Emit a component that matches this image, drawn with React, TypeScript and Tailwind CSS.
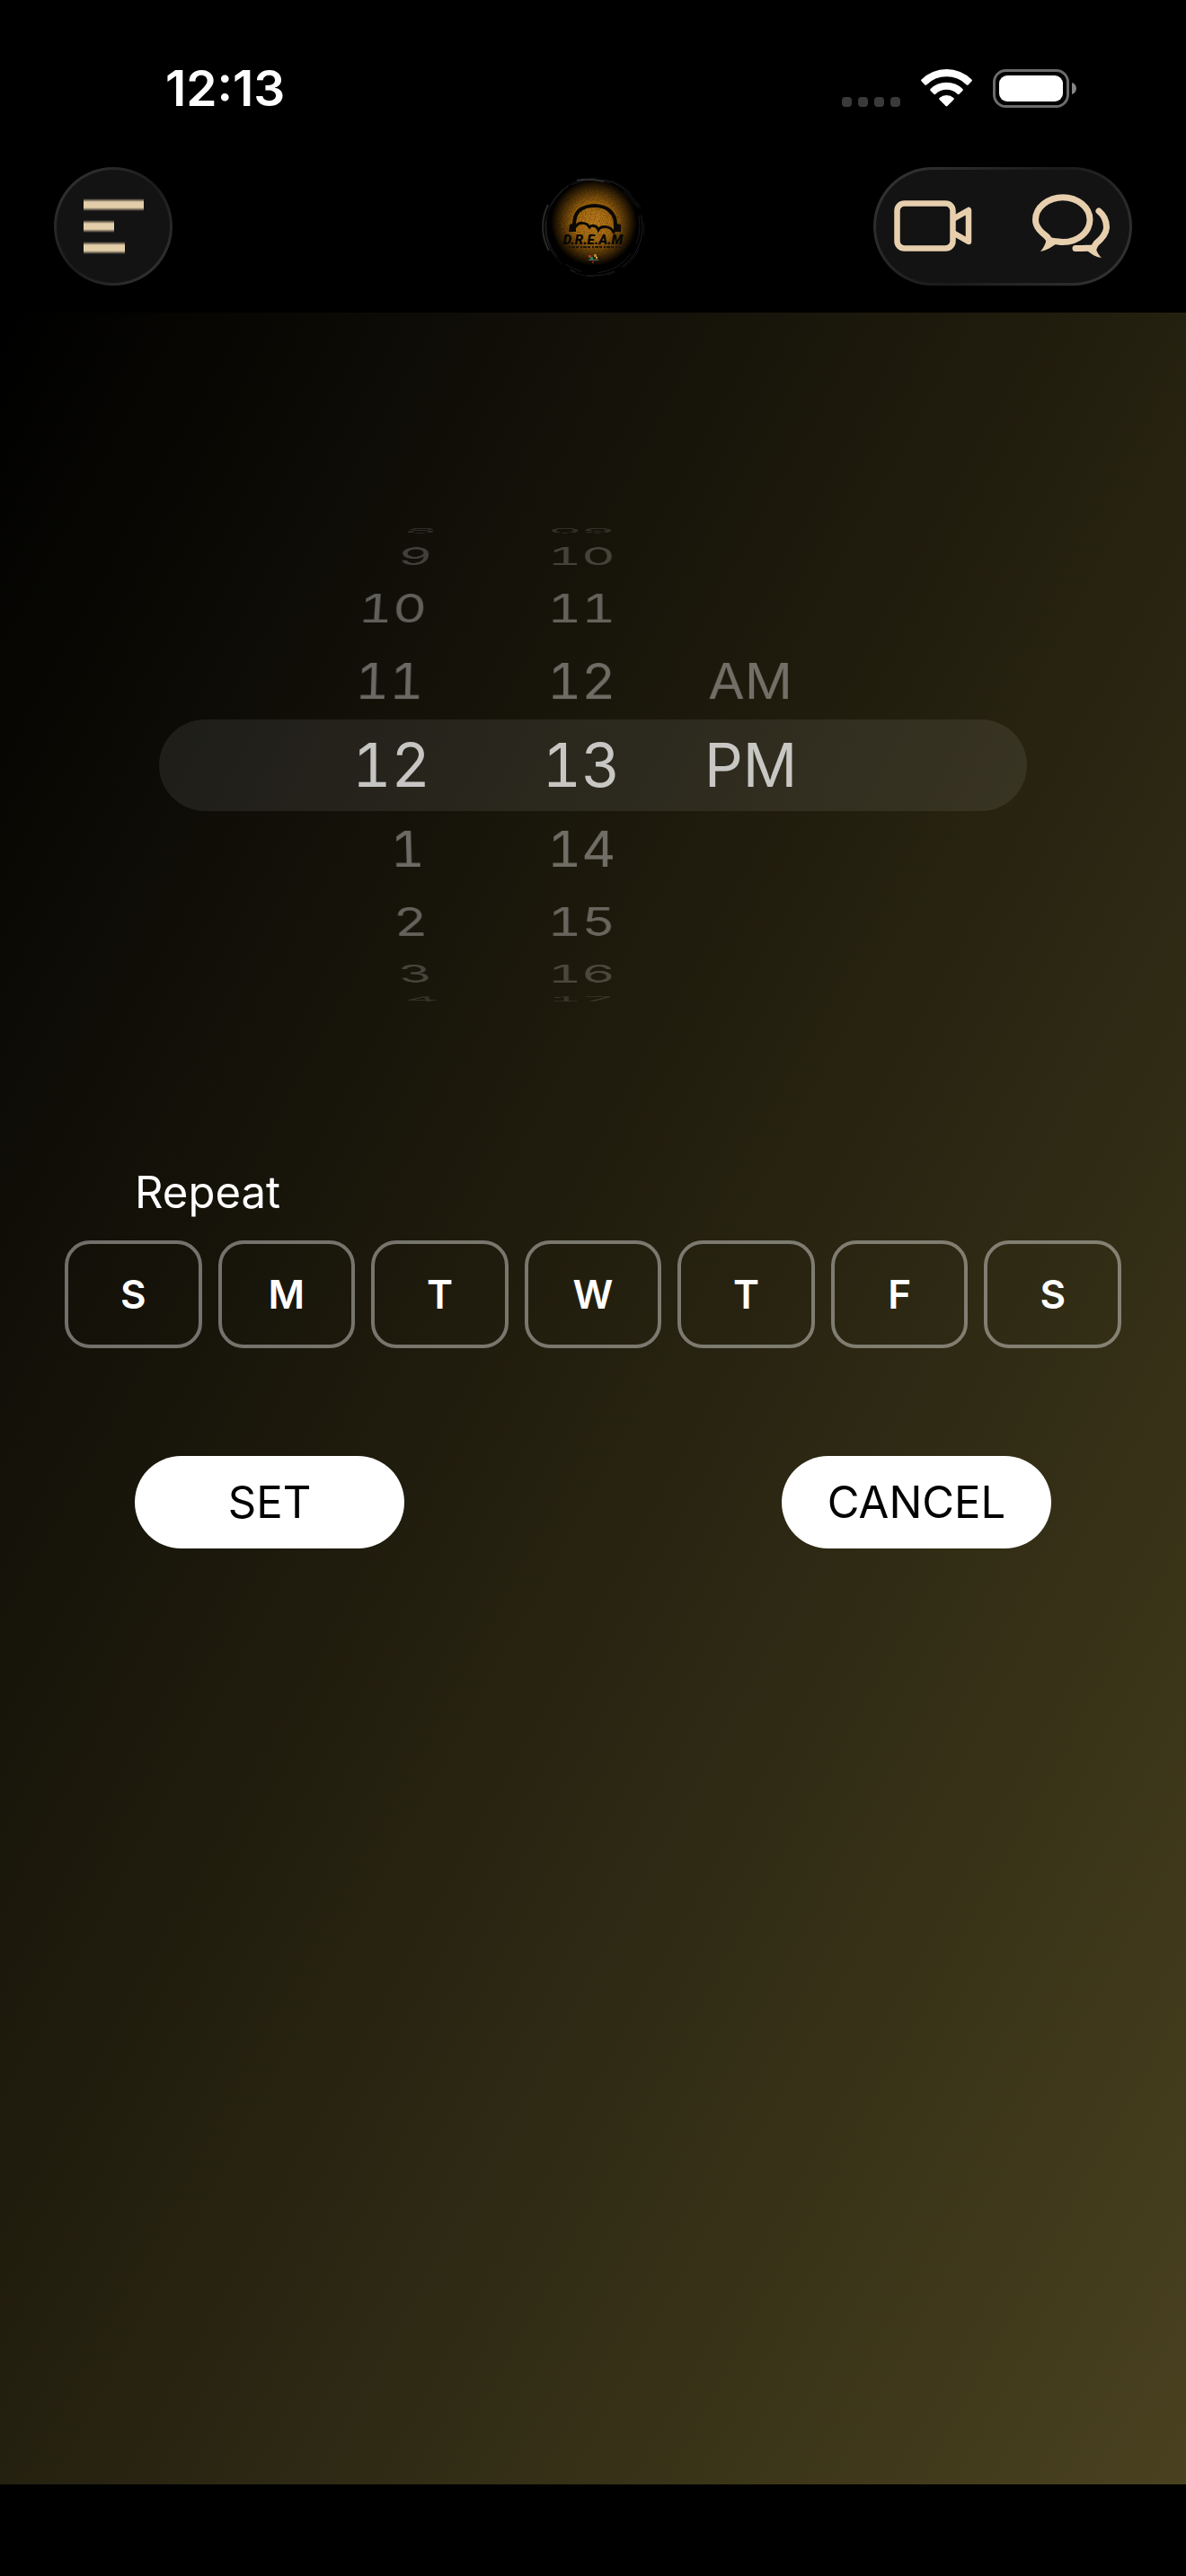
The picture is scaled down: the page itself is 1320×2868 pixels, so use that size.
import { useState } from "react";

const HOURS = ["8", "9", "10", "11", "12", "1", "2", "3", "4"];
const MINUTES = ["09", "10", "11", "12", "13", "14", "15", "16", "17"];
const PERIODS = ["AM", "PM"];
const DAYS = [
  { short: "S", name: "Sunday" },
  { short: "M", name: "Monday" },
  { short: "T", name: "Tuesday" },
  { short: "W", name: "Wednesday" },
  { short: "T", name: "Thursday" },
  { short: "F", name: "Friday" },
  { short: "S", name: "Saturday" },
];

const ROW_ANGLE = 20;
const WHEEL_RADIUS = 274;
const FADE = [0.74, 0.37, 0.33, 0.2, 0.12];

type WheelProps = {
  label: string;
  items: string[];
  selected: number;
  className: string;
  restClassName: string;
};

/* A drum whose rows sit every 20 degrees around a horizontal axle. */
function Wheel({ label, items, selected, className, restClassName }: WheelProps) {
  return (
    <ul
      role="listbox"
      aria-label={label}
      className={"grid items-center tabular-nums leading-none perspective-[6500px] " + className}
    >
      {items.map((item, i) => {
        const step = i - selected;
        return (
          <li
            key={item}
            role="option"
            aria-selected={step === 0}
            className={
              "[grid-area:1/1] text-white " +
              (step === 0 ? "text-[67px]" : "text-[59px] " + restClassName)
            }
            style={{
              opacity: FADE[Math.abs(step)],
              transform: `translateZ(${-WHEEL_RADIUS}px) rotateX(${-step * ROW_ANGLE}deg) translateZ(${WHEEL_RADIUS}px)`,
            }}
          >
            {item}
          </li>
        );
      })}
    </ul>
  );
}

function StatusBar() {
  return (
    <div className="flex items-center justify-between pt-[66px] pr-[122px] pl-[184px]">
      <span className="text-[55px] leading-16 font-semibold text-white">12:13</span>
      <div className="flex items-center">
        <svg width="65" height="43" viewBox="0 0 65 43" role="img" aria-label="No signal" fill="#3a3a3a">
          <rect x="0" y="31" width="11" height="11" rx="4" />
          <rect x="18" y="31" width="11" height="11" rx="4" />
          <rect x="36" y="31" width="11" height="11" rx="4" />
          <rect x="54" y="31" width="11" height="11" rx="4" />
        </svg>
        <svg className="ml-[23px]" width="57" height="43" viewBox="0 0 57 43" role="img" aria-label="Wi-Fi" fill="#fff">
          <path d="M0.6 11.6 A39.5 39.5 0 0 1 56.4 11.6 Q57.4 12.6 56.4 13.6 L52.6 17.4 Q51.7 18.3 50.8 17.4 A31.6 31.6 0 0 0 6.2 17.4 Q5.3 18.3 4.4 17.4 L0.6 13.6 Q-0.4 12.6 0.6 11.6Z" />
          <path d="M10.6 22 A25.6 25.6 0 0 1 46.4 22 Q47.4 23 46.4 24 L42.6 27.8 Q41.7 28.7 40.7 27.8 A17.4 17.4 0 0 0 16.3 27.8 Q15.3 28.7 14.4 27.8 L10.6 24 Q9.6 23 10.6 22Z" />
          <path d="M20.6 32 A11.8 11.8 0 0 1 36.4 32 Q37.4 33 36.4 34 L29.4 41.1 Q28.5 42 27.6 41.1 L20.6 34 Q19.6 33 20.6 32Z" />
        </svg>
        <svg className="ml-[23px]" width="93" height="43" viewBox="0 0 93 43" role="img" aria-label="Battery full">
          <rect x="1.5" y="1.5" width="82" height="40" rx="13" fill="none" stroke="#6b6b6b" strokeWidth="3" />
          <rect x="7" y="7" width="71" height="29" rx="9" fill="#fff" />
          <path d="M88 15 C94.6 17 94.6 26 88 28Z" fill="#868686" />
        </svg>
      </div>
    </div>
  );
}

function Logo() {
  return (
    <svg width="116" height="116" viewBox="602 194 116 116" role="img" aria-label="D.R.E.A.M">
      <defs>
        <radialGradient id="glow" gradientUnits="userSpaceOnUse" cx="661" cy="248" r="48">
          <stop offset="0" stopColor="#c07e1c" />
          <stop offset="0.45" stopColor="#a5690f" />
          <stop offset="0.75" stopColor="#4e3107" />
          <stop offset="1" stopColor="#000" />
        </radialGradient>
        <filter id="grain" x="0" y="0" width="1" height="1">
          <feTurbulence type="fractalNoise" baseFrequency="0.7" numOctaves="2" result="n" />
          <feColorMatrix in="n" type="matrix" values="0 0 0 0 0  0 0 0 0 0  0 0 0 0 0  0 0 0 1.6 -0.6" result="m" />
          <feComposite in="m" in2="SourceGraphic" operator="in" />
        </filter>
      </defs>
      <circle cx="661" cy="248" r="48" fill="url(#glow)" />
      <circle cx="661" cy="248" r="48" filter="url(#grain)" opacity="0.45" />
      <g fill="none" stroke="#3c3c3c" strokeWidth="1">
        <circle cx="661" cy="253" r="54" strokeDasharray="52 9 31 14 6 20" strokeOpacity="0.5" />
        <circle cx="660" cy="252" r="52" strokeDasharray="20 12 44 18" strokeOpacity="0.4" />
        <circle cx="662" cy="253" r="55" strokeDasharray="9 16 27 11" strokeOpacity="0.3" />
        <path d="M611 279 A54 54 0 0 1 610 228" strokeWidth="2" strokeOpacity="0.7" />
        <path d="M642 201 Q654 198 672 202" strokeWidth="2" strokeOpacity="0.7" />
      </g>
      <g fill="none" stroke="#0b0805" strokeLinecap="round">
        <path d="M639 251 C639 243 640 239 644 235 C653 227 670 227 679 235 C684 240 685 244 685 251" strokeWidth="4" />
        <path d="M641 252 C644 247 653 247 656 253 C659 250 664 251 666 256 C669 251 680 251 683 259" strokeWidth="3" />
      </g>
      <path d="M634 250 l7 -2 v10 h-8z M691 250 l-8 -2 v10 h8z" fill="#0b0805" />
      <text x="660" y="272" textAnchor="middle" fill="#080604" fontFamily="Roboto, sans-serif" fontSize="15" fontWeight="900" fontStyle="italic">
        D.R.E.A.M
      </text>
      <path d="M633 275 H691" stroke="#20160a" strokeWidth="2" strokeDasharray="2 1 4 1 3 2" />
      <g>
        <rect x="655" y="284" width="3" height="3" fill="#a8362a" />
        <rect x="657" y="286" width="3" height="3" fill="#1f7f60" />
        <rect x="661" y="283" width="3" height="3" fill="#b97f1b" />
        <rect x="663" y="286" width="2" height="2" fill="#c9ae38" />
        <rect x="655" y="289" width="11" height="1" fill="#5f6f68" />
        <rect x="659" y="291" width="2" height="2" fill="#8c1f16" />
      </g>
    </svg>
  );
}

function MenuIcon() {
  return (
    <svg width="68" height="62" viewBox="0 0 68 62" aria-hidden="true">
      <defs>
        <linearGradient id="bar" x1="0" y1="0" x2="0" y2="1">
          <stop offset="0" stopColor="#e3ceaa" stopOpacity="0" />
          <stop offset="0.28" stopColor="#e3ceaa" />
          <stop offset="0.72" stopColor="#e3ceaa" />
          <stop offset="1" stopColor="#e3ceaa" stopOpacity="0" />
        </linearGradient>
      </defs>
      <rect x="0" y="0" width="67" height="14" fill="url(#bar)" />
      <rect x="0" y="24" width="34" height="14" fill="url(#bar)" />
      <rect x="0" y="48" width="46" height="14" fill="url(#bar)" />
    </svg>
  );
}

function CameraIcon() {
  return (
    <svg width="88" height="58" viewBox="0 0 88 58" fill="none" stroke="#e7cfae" strokeWidth="6.5" strokeLinejoin="round" aria-hidden="true">
      <rect x="3.5" y="3.5" width="62" height="50" rx="8" />
      <path d="M65.5 21 L83 11 V46 L65.5 36" />
    </svg>
  );
}

function ChatIcon() {
  return (
    <svg width="88" height="72" viewBox="0 0 88 72" fill="none" stroke="#e7cfae" strokeWidth="7" strokeLinecap="round" strokeLinejoin="round" aria-hidden="true">
      <path d="M34 3.7 C50.5 3.7 64 15 64 28.5 C64 42 51 53.5 34 53.5 C30 53.5 28 52.5 24 52.5 L19 53 C18.5 49 16 47 12 44 C6.5 39.5 3.5 34.5 3.5 28.5 C3.5 15 17.5 3.7 34 3.7Z" />
      <path d="M14.5 47 C17 51 14 58 9 64 C17 62.5 21 59 27 55 L24 49Z" fill="#e7cfae" stroke="none" />
      <path d="M74 19 C79 23 82.5 30 82.5 37 C82.5 44 77 50 71 55 C69.5 57 69 58 68.5 60 C61 60 60 60.5 48 60.5" />
      <path d="M71 56 C70 61 72 66 77 71 C70 70 66 67 61 63 L64 57Z" fill="#e7cfae" stroke="none" />
    </svg>
  );
}

const glass =
  "border-3 border-transparent [background:linear-gradient(#131313,#131313)_padding-box,linear-gradient(135deg,#363636,#1b1b1b_50%,#363636)_border-box]";

function NavBar() {
  return (
    <div className="grid grid-cols-[1fr_auto_1fr] items-center px-[60px] pt-14 pb-[30px]">
      <button
        type="button"
        aria-label="Menu"
        className={"flex size-[132px] items-center rounded-full pl-[30px] " + glass}
      >
        <MenuIcon />
      </button>
      <Logo />
      <div className={"flex h-[132px] items-center justify-self-end rounded-full px-5 " + glass}>
        <button type="button" aria-label="Video" className="pr-[66px]">
          <CameraIcon />
        </button>
        <button type="button" aria-label="Chat">
          <ChatIcon />
        </button>
      </div>
    </div>
  );
}

export default function App() {
  const [days, setDays] = useState<number[]>([]);
  const toggle = (day: number) =>
    setDays((d) => (d.includes(day) ? d.filter((x) => x !== day) : [...d, day]));

  return (
    <div className="flex min-h-screen flex-col bg-black pb-[102px] font-[Inter,'Liberation_Sans',sans-serif]">
      <header>
        <StatusBar />
        <NavBar />
      </header>

      <main className="grow bg-linear-to-br/srgb from-black to-[#49411f]">
        <section aria-label="Time" className="flex justify-center px-10 pt-[453px]">
          <div className="flex h-[102px] w-[966px] items-center rounded-full bg-white/8">
            <Wheel
              label="Hour"
              items={HOURS}
              selected={4}
              className="w-[302px] justify-items-end pb-0.5 perspective-origin-[770px_50%]"
              restClassName="pr-2"
            />
            <Wheel
              label="Minute"
              items={MINUTES}
              selected={4}
              className="ml-[113px] w-[110px] justify-items-center pb-0.5"
              restClassName=""
            />
            <Wheel
              label="AM or PM"
              items={PERIODS}
              selected={1}
              className="ml-[82px] w-[120px] justify-items-start pb-0.5"
              restClassName="pl-1"
            />
          </div>
        </section>

        <section aria-label="Repeat" className="px-18 pt-[389px]">
          <h2 className="pl-[78px] text-[49px] leading-[72px] text-white">Repeat</h2>
          <div className="mt-[17px] grid grid-cols-7 gap-[18px]">
            {DAYS.map((day, i) => (
              <button
                key={day.name}
                type="button"
                aria-label={day.name}
                aria-pressed={days.includes(i)}
                onClick={() => toggle(i)}
                className={
                  "h-[120px] rounded-[28px] border-4 border-white/40 text-[44px] font-semibold text-white " +
                  (days.includes(i) ? "bg-white/20" : "")
                }
              >
                {day.short}
              </button>
            ))}
          </div>
        </section>

        <div className="flex justify-between px-[150px] pt-30">
          <button type="button" className="h-[103px] w-[300px] rounded-full bg-white text-[49px] text-black">
            SET
          </button>
          <button type="button" className="h-[103px] w-[300px] rounded-full bg-white text-[49px] text-black">
            CANCEL
          </button>
        </div>
      </main>
    </div>
  );
}
